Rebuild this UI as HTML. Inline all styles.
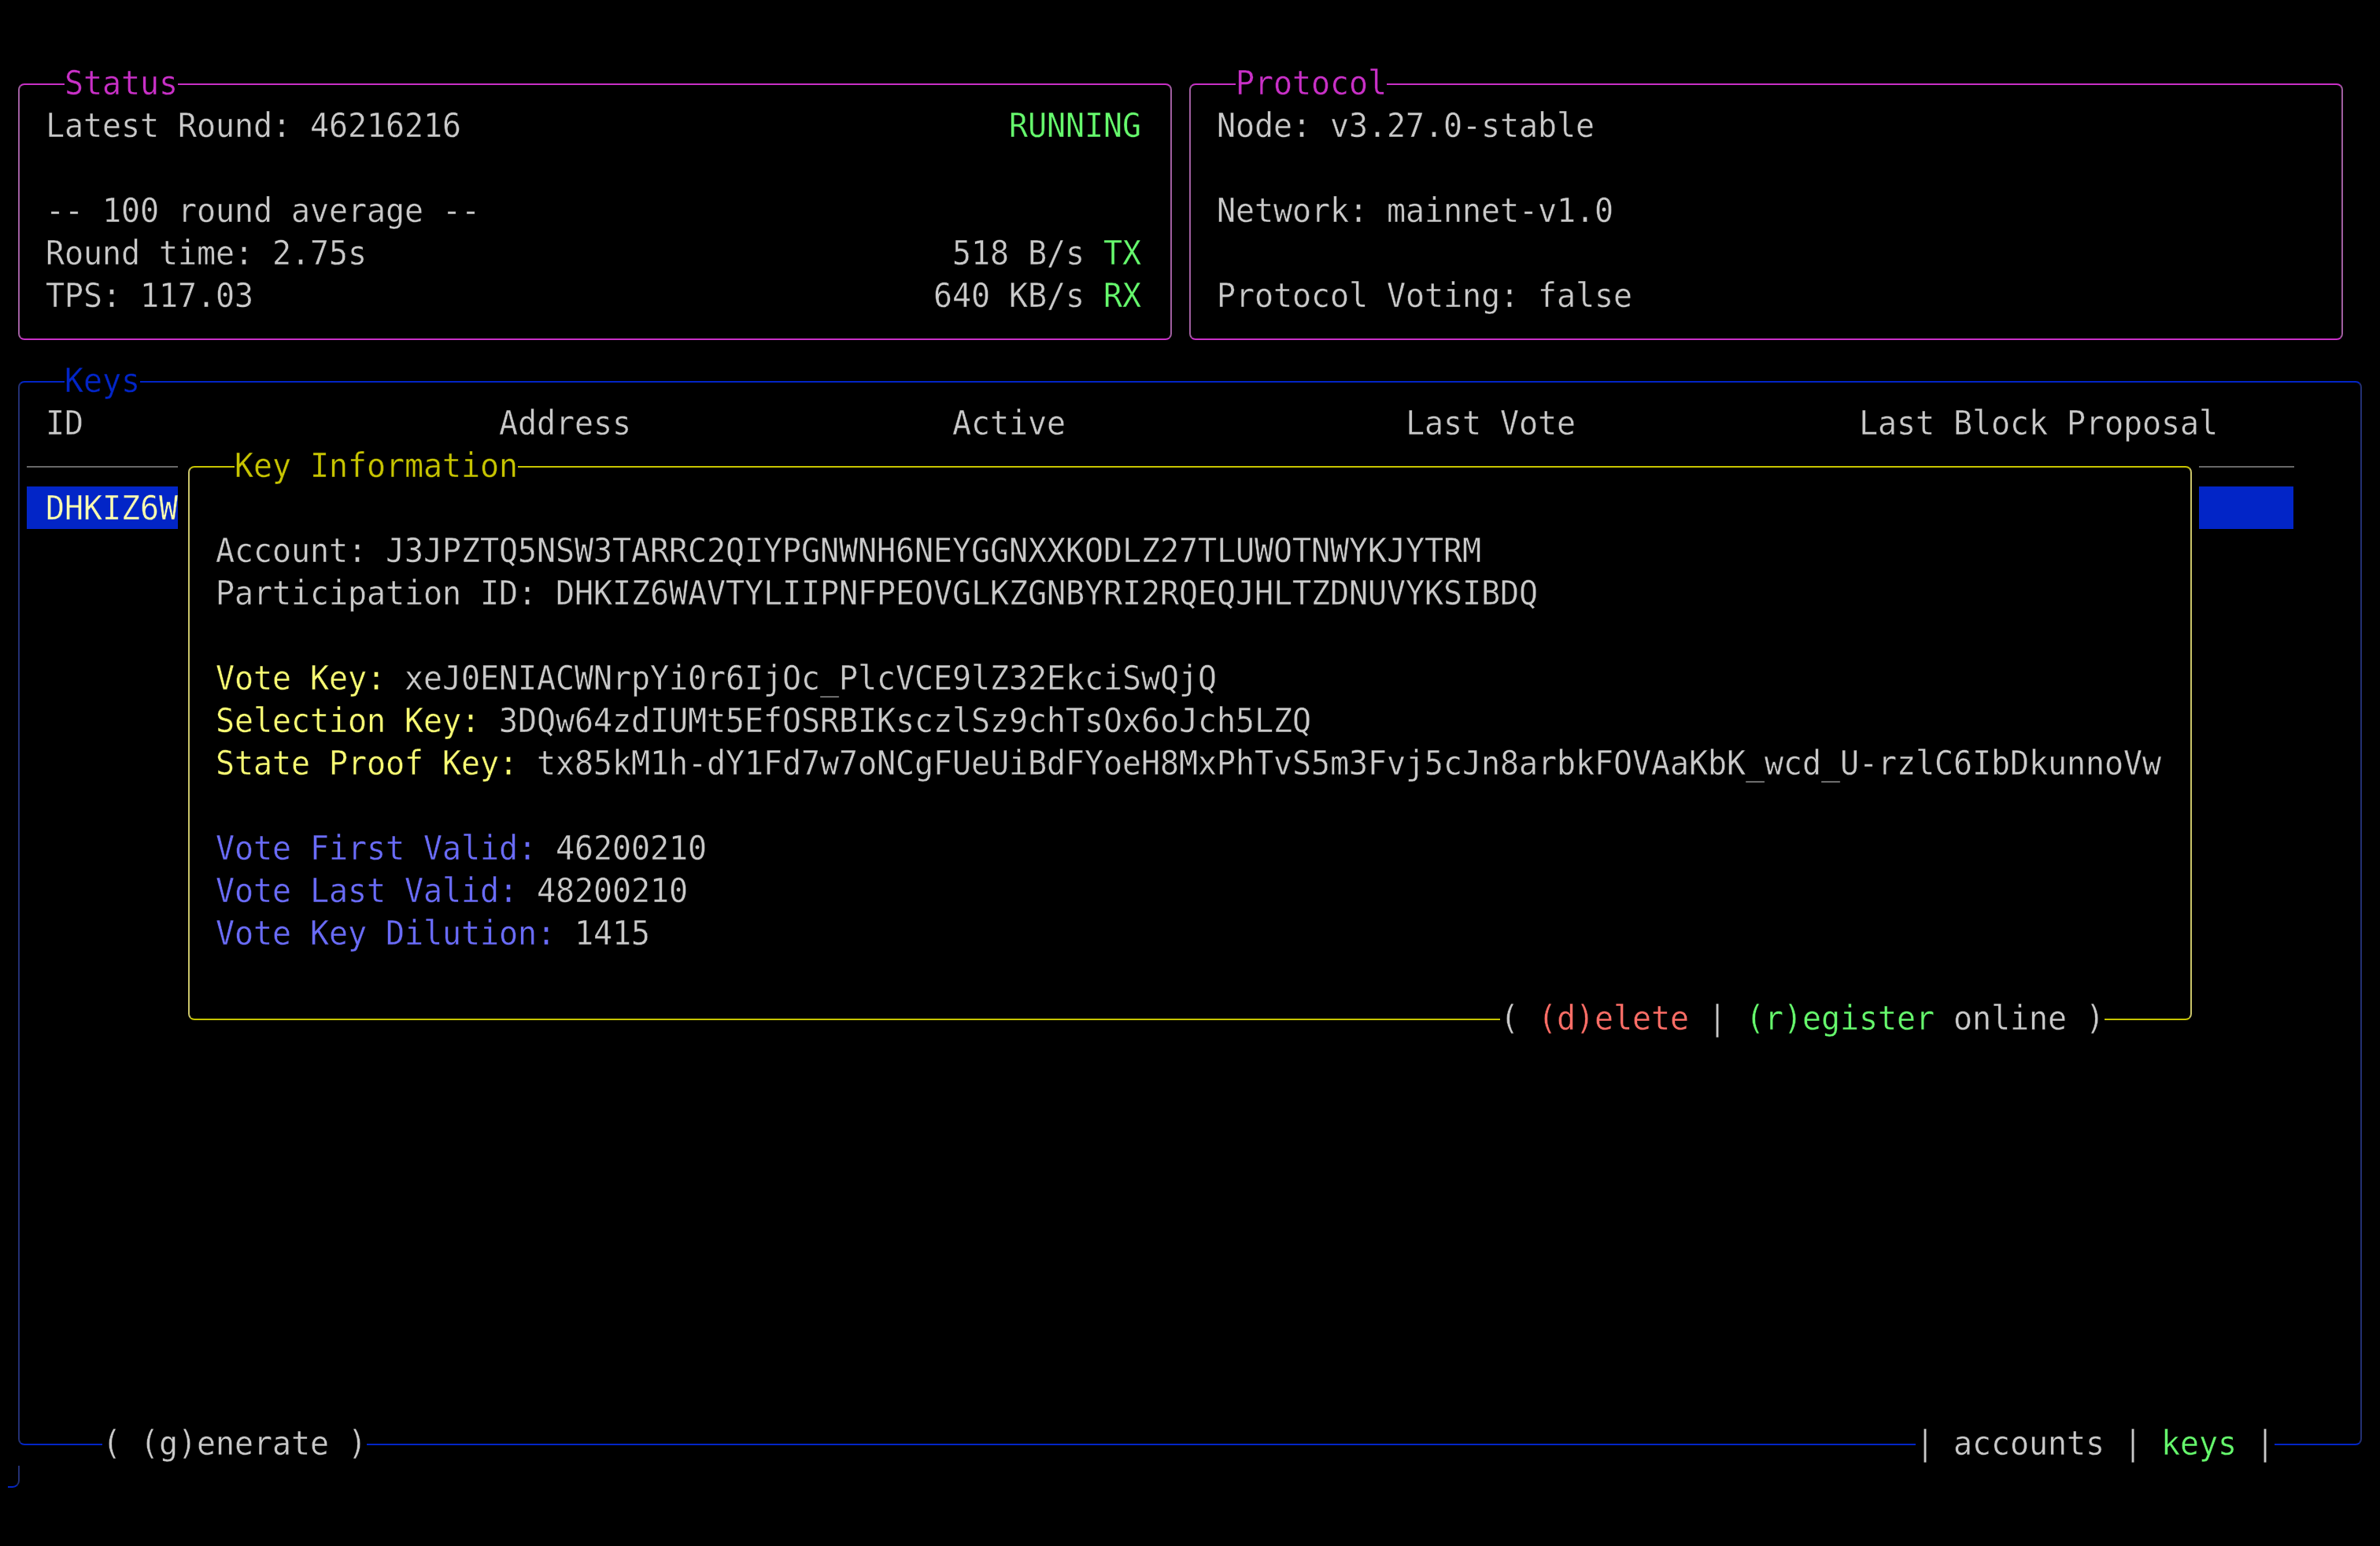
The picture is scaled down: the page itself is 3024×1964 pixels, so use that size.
<!DOCTYPE html>
<html lang="en"><head><meta charset="utf-8"><title>node ui - keys</title>
<style>
html,body{margin:0;padding:0;background:#000;}
body{will-change:transform;width:3024px;height:1964px;position:relative;overflow:hidden;
 font-family:"DejaVu Sans Mono", "Liberation Mono", monospace;font-size:40.0px;letter-spacing:-0.0820px;color:#c9c9c9;
 font-kerning:none;font-variant-ligatures:none;-webkit-font-smoothing:antialiased;}
.t{position:absolute;height:54px;line-height:54px;white-space:pre;overflow:visible;}
.t.k{background:#000;}
.g{position:relative;left:-2.0px;top:-0.7px;display:inline-block;transform:scaleY(1.045);transform-origin:0 40.84px;-webkit-text-stroke:0.4px #000;}
.g.sel{-webkit-text-stroke-color:#0225c7;}
.b{position:absolute;box-sizing:border-box;border:2px solid;border-radius:8px;}
.r{position:absolute;}
.s{position:absolute;box-sizing:border-box;border:0 solid;border-right-width:2px;border-bottom-width:2px;border-bottom-right-radius:9px;}
</style></head>
<body>
<div class="b" style="left:23px;top:106px;width:1466px;height:326px;border-color:#c930c7 #a05fa0;"></div>
<div class="b" style="left:1511px;top:106px;width:1466px;height:326px;border-color:#c930c7 #a05fa0;"></div>
<div class="t k" style="left:82px;top:80px;width:144px"><span class="g" style="left:0.0px"><span style="color:#c930c7">Status</span></span></div>
<div class="t k" style="left:1570px;top:80px;width:192px"><span class="g" style="left:0.0px"><span style="color:#c930c7">Protocol</span></span></div>
<div class="t" style="left:60px;top:134px;width:526px;"><span class="g">Latest Round: 46216216</span></div>
<div class="t" style="left:1284px;top:134px;width:166px;"><span class="g"><span style="color:#66fa6d">RUNNING</span></span></div>
<div class="t" style="left:60px;top:242px;width:550px;"><span class="g">-- 100 round average --</span></div>
<div class="t" style="left:60px;top:296px;width:406px;"><span class="g">Round time: 2.75s</span></div>
<div class="t" style="left:1212px;top:296px;width:238px;"><span class="g">518 B/s <span style="color:#66fa6d">TX</span></span></div>
<div class="t" style="left:60px;top:350px;width:262px;"><span class="g">TPS: 117.03</span></div>
<div class="t" style="left:1188px;top:350px;width:262px;"><span class="g">640 KB/s <span style="color:#66fa6d">RX</span></span></div>
<div class="t" style="left:1548px;top:134px;width:478px;"><span class="g">Node: v3.27.0-stable</span></div>
<div class="t" style="left:1548px;top:242px;width:502px;"><span class="g">Network: mainnet-v1.0</span></div>
<div class="t" style="left:1548px;top:350px;width:526px;"><span class="g">Protocol Voting: false</span></div>
<div class="b" style="left:23px;top:484px;width:2978px;height:1352px;border-color:#0225c7 #233073;"></div>
<div class="t k" style="left:82px;top:458px;width:96px"><span class="g" style="left:0.0px"><span style="color:#0225c7">Keys</span></span></div>
<div class="t" style="left:60px;top:512px;width:46px;"><span class="g">ID</span></div>
<div class="t" style="left:636px;top:512px;width:166px;"><span class="g">Address</span></div>
<div class="t" style="left:1212px;top:512px;width:142px;"><span class="g">Active</span></div>
<div class="t" style="left:1788px;top:512px;width:214px;"><span class="g">Last Vote</span></div>
<div class="t" style="left:2364px;top:512px;width:454px;"><span class="g">Last Block Proposal</span></div>
<div class="r" style="left:34px;top:592px;width:2881px;height:2px;background:#686868"></div>
<div class="r" style="left:34px;top:618px;width:2880px;height:54px;background:#0225c7"></div>
<div class="t" style="left:60px;top:620px;width:166px;overflow:hidden;"><span class="g sel"><span style="color:#ffffaf">DHKIZ6W</span></span></div>
<div class="t k" style="left:130px;top:1808px;width:336px"><span class="g" style="left:0.0px">( (g)enerate )</span></div>
<div class="t k" style="left:2434px;top:1808px;width:456px"><span class="g" style="left:0.0px">| accounts | <span style="color:#66fa6d">keys</span> |</span></div>
<div class="s" style="left:10px;top:1862px;width:15px;height:28px;border-color:#0225c7 #233073"></div>
<div class="r" style="left:226px;top:564px;width:2568px;height:758px;background:#000"></div>
<div class="b" style="left:239px;top:592px;width:2546px;height:704px;border-color:#c7c400 #cac469;"></div>
<div class="t k" style="left:298px;top:566px;width:360px"><span class="g" style="left:0.0px"><span style="color:#c7c400">Key Information</span></span></div>
<div class="t" style="left:276px;top:674px;width:1606px;"><span class="g">Account: J3JPZTQ5NSW3TARRC2QIYPGNWNH6NEYGGNXXKODLZ27TLUWOTNWYKJYTRM</span></div>
<div class="t" style="left:276px;top:728px;width:1678px;"><span class="g">Participation ID: DHKIZ6WAVTYLIIPNFPEOVGLKZGNBYRI2RQEQJHLTZDNUVYKSIBDQ</span></div>
<div class="t" style="left:276px;top:836px;width:1270px;"><span class="g"><span style="color:#f9fc74">Vote Key:</span> xeJ0ENIACWNrpYi0r6IjOc_PlcVCE9lZ32EkciSwQjQ</span></div>
<div class="t" style="left:276px;top:890px;width:1390px;"><span class="g"><span style="color:#f9fc74">Selection Key:</span> 3DQw64zdIUMt5EfOSRBIKsczlSz9chTsOx6oJch5LZQ</span></div>
<div class="t" style="left:276px;top:944px;width:2470px;"><span class="g"><span style="color:#f9fc74">State Proof Key:</span> tx85kM1h-dY1Fd7w7oNCgFUeUiBdFYoeH8MxPhTvS5m3Fvj5cJn8arbkFOVAaKbK_wcd_U-rzlC6IbDkunnoVw</span></div>
<div class="t" style="left:276px;top:1052px;width:622px;"><span class="g"><span style="color:#6a6cf8">Vote First Valid:</span> 46200210</span></div>
<div class="t" style="left:276px;top:1106px;width:598px;"><span class="g"><span style="color:#6a6cf8">Vote Last Valid:</span> 48200210</span></div>
<div class="t" style="left:276px;top:1160px;width:550px;"><span class="g"><span style="color:#6a6cf8">Vote Key Dilution:</span> 1415</span></div>
<div class="t k" style="left:1906px;top:1268px;width:768px"><span class="g" style="left:0.0px">( <span style="color:#ff6e67">(d)elete</span> | <span style="color:#66fa6d">(r)egister</span> online )</span></div>
</body></html>
